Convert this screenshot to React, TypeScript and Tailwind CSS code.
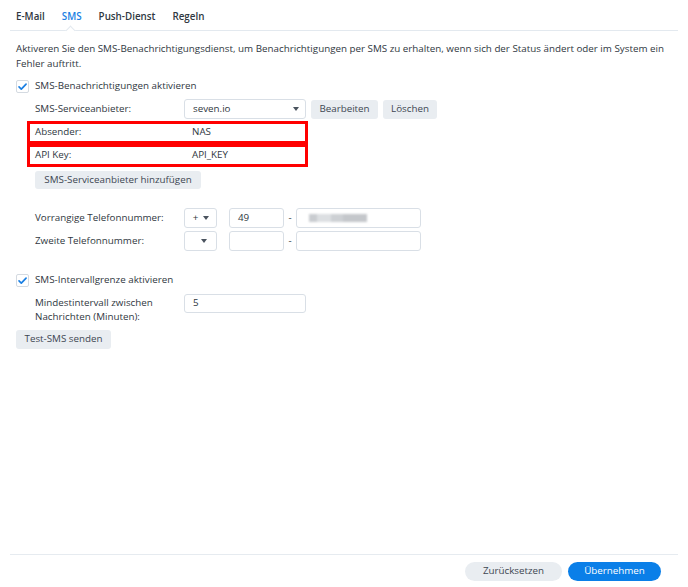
import React from "react";

const field = "h-full rounded-[3px] border border-[#d9dfe6] bg-white";
const grayBtn = "flex items-center justify-center rounded-[3px] bg-[#e9edf1] text-[#3d4651]";

function Caret() {
  return <span className="inline-block h-0 w-0 border-x-[3.5px] border-t-[4px] border-x-transparent border-t-[#4a535e]" />;
}

function Check() {
  return (
    <span className="flex h-[13px] w-[13px] items-center justify-center rounded-[2px] border border-[#d4dae1] bg-white">
      <svg viewBox="0 0 12 12" className="h-[11px] w-[11px]" fill="none" stroke="#1a7fe3" strokeWidth={1.8} strokeLinecap="round" strokeLinejoin="round">
        <path d="M2.2 6.4l2.5 2.5L9.9 3.4" />
      </svg>
    </span>
  );
}

function Input({ w, value }: { w: number; value?: string }) {
  return (
    <div className={`${field} flex items-center pl-[8px]`} style={{ width: w }}>
      {value}
    </div>
  );
}

export default function App() {
  return (
    <div className="flex h-[587px] w-[688px] flex-col overflow-hidden bg-white font-['Open_Sans',sans-serif] text-[9.8px] text-[#2f3741]">
      {/* tabs */}
      <div className="relative mx-[10px] flex h-[31px] shrink-0 items-center gap-[17px] border-b border-[#e3e9ef] pl-[6px] pt-[5px] font-semibold">
        <span>E-Mail</span>
        <span className="text-[#1a7fe3]">SMS</span>
        <span>Push-Dienst</span>
        <span>Regeln</span>
        <span className="absolute bottom-[-4px] left-[57px] h-[7px] w-[7px] rotate-45 border-l border-t border-[#e3e9ef] bg-white" />
      </div>

      <div className="flex flex-col px-4">
        <p className="mt-[10px] leading-[15px]">
          Aktiveren Sie den SMS-Benachrichtigungsdienst, um Benachrichtigungen per SMS zu erhalten, wenn sich der Status ändert oder im System ein Fehler auftritt.
        </p>

        <div className="mt-[6px] flex h-[18px] items-center gap-[6px]">
          <Check />
          <span>SMS-Benachrichtigungen aktivieren</span>
        </div>

        <div className="mt-[4px] flex h-[20px] items-center pl-[19px]">
          <span className="w-[149px]">SMS-Serviceanbieter:</span>
          <div className={`${field} flex w-[122px] items-center justify-between pl-[8px] pr-[6px]`}>
            <span>seven.io</span>
            <Caret />
          </div>
          <div className={`${grayBtn} ml-[5px] h-[19px] w-[67px]`}>Bearbeiten</div>
          <div className={`${grayBtn} ml-[5px] h-[19px] w-[54px]`}>Löschen</div>
        </div>

        <div className="ml-[11px] mt-[2px] flex h-[23px] w-[281px] items-center border-[3px] border-[#ff0000] pl-[5px]">
          <span className="w-[149px]">Absender:</span>
          <div className="flex h-full flex-1 items-center bg-white pl-[8px]">NAS</div>
        </div>
        <div className="ml-[11px] mt-[0px] flex h-[23px] w-[281px] items-center border-[3px] border-[#ff0000] pl-[5px]">
          <span className="w-[149px]">API Key:</span>
          <div className="flex h-full flex-1 items-center bg-white pl-[8px]">API_KEY</div>
        </div>

        <div className="mt-[4px] pl-[19px]">
          <div className={`${grayBtn} h-[18px] w-[166px]`}>SMS-Serviceanbieter hinzufügen</div>
        </div>

        <div className="mt-[19px] flex h-[20px] items-center pl-[19px]">
          <span className="w-[149px]">Vorrangige Telefonnummer:</span>
          <div className={`${field} flex w-[33px] items-center justify-center gap-[5px] pl-[1px]`}>
            <span>+</span>
            <Caret />
          </div>
          <div className="ml-[12px] h-full">
            <Input w={55} value="49" />
          </div>
          <span className="w-[12px] text-center">-</span>
          <div className={`${field} flex w-[125px] items-center pl-[12px]`}>
            <div className="flex h-[8px] w-[58px] blur-[1.2px]">
              <span className="h-full w-[8px] bg-[#c9ccd0]" />
              <span className="h-full w-[14px] bg-[#dcdfe2]" />
              <span className="h-full w-[12px] bg-[#cdd0d4]" />
              <span className="h-full w-[24px] bg-[#c4c7cb]" />
            </div>
          </div>
        </div>

        <div className="mt-[3px] flex h-[20px] items-center pl-[19px]">
          <span className="w-[149px]">Zweite Telefonnummer:</span>
          <div className={`${field} flex w-[33px] items-center justify-end pr-[9px]`}>
            <Caret />
          </div>
          <div className="ml-[12px] h-full">
            <Input w={55} />
          </div>
          <span className="w-[12px] text-center">-</span>
          <Input w={125} />
        </div>

        <div className="mt-[20px] flex h-[18px] items-center gap-[6px]">
          <Check />
          <span>SMS-Intervallgrenze aktivieren</span>
        </div>

        <div className="mt-[5px] flex items-start pl-[19px]">
          <span className="mt-[2px] w-[149px] leading-[14px]">
            Mindestintervall zwischen
            <br />
            Nachrichten (Minuten):
          </span>
          <div className="h-[19px]">
            <Input w={122} value="5" />
          </div>
        </div>

        <div className="mt-[6px]">
          <div className={`${grayBtn} h-[19px] w-[95px]`}>Test-SMS senden</div>
        </div>
      </div>

      <div className="flex-1" />

      <div className="mx-[10px] flex h-[33px] shrink-0 items-start justify-end gap-[6px] border-t border-[#e6ebf0] pr-[17px] pt-[7px]">
        <div className="flex h-[19px] w-[97px] items-center justify-center rounded-full bg-[#e9edf1] text-[#3d4651]">
          Zurücksetzen
        </div>
        <div className="flex h-[19px] w-[93px] items-center justify-center rounded-full bg-[#0a7fe8] text-white">
          Übernehmen
        </div>
      </div>
    </div>
  );
}
